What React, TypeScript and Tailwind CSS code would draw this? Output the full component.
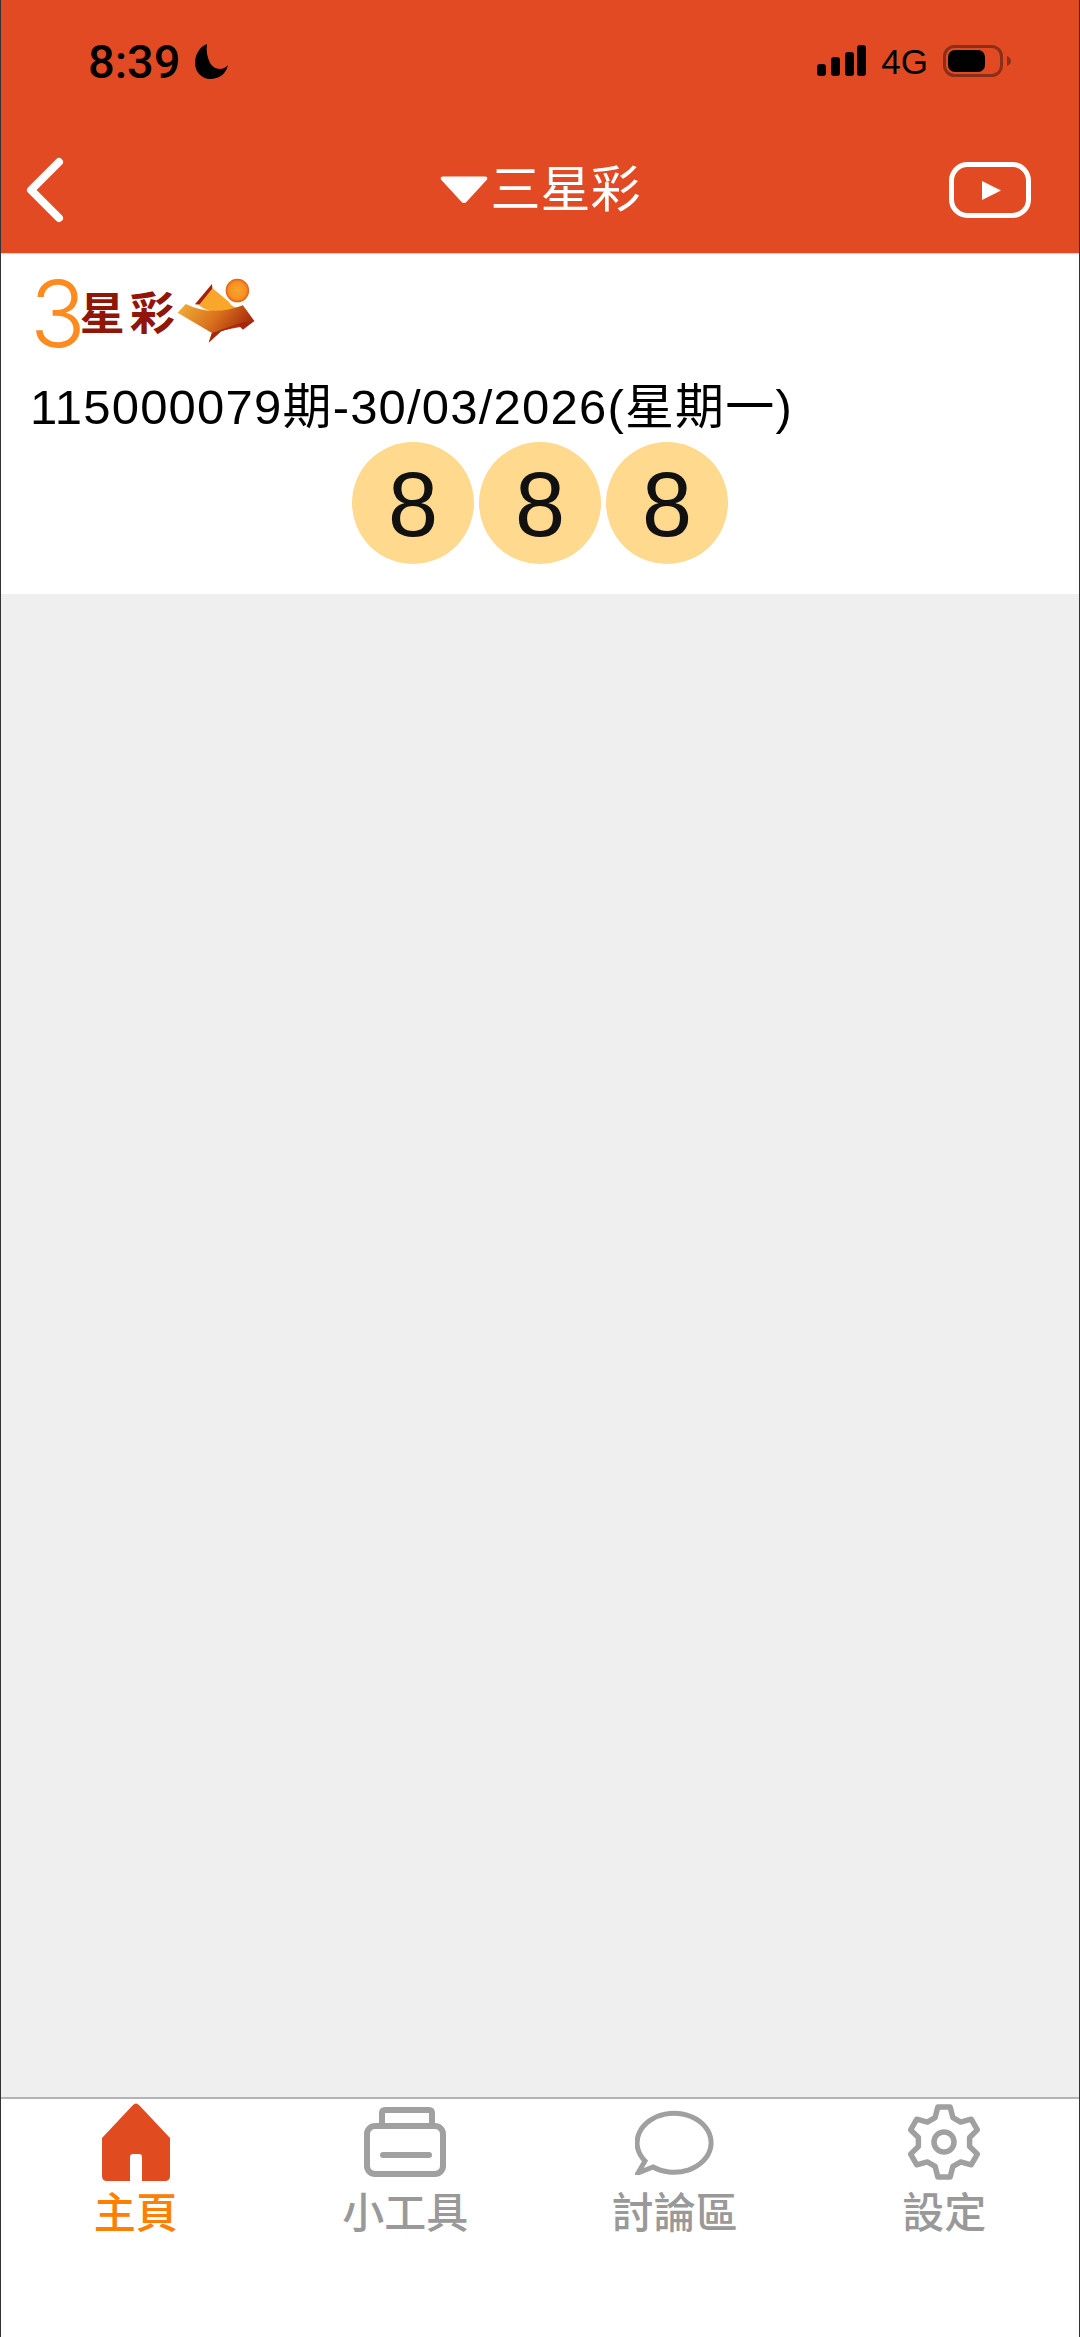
const latin = "font-['Liberation_Sans','Noto_Sans_CJK_TC',sans-serif]";

// six-tooth outline for the settings tab
const gearPoints = Array.from({ length: 6 }, (_, i) => {
  const mid = -90 + i * 60;
  return [
    [mid - 20, 26],
    [mid - 10, 35.5],
    [mid + 10, 35.5],
    [mid + 20, 26],
  ].map(([deg, r]) => {
    const a = (deg * Math.PI) / 180;
    return `${(38 + r * Math.cos(a)).toFixed(2)},${(38 + r * Math.sin(a)).toFixed(2)}`;
  }).join(" ");
}).join(" ");

function HomeIcon() {
  return (
    <svg width="68" height="78" viewBox="0 0 68 78">
      <path
        d="M31 2 Q34 -1 37 2 L68 35 V73 Q68 78 63 78 H40 V54 Q40 51 37 51 H31 Q28 51 28 54 V78 H5 Q0 78 0 73 V35 Z"
        fill="#E04B20"
      />
    </svg>
  );
}

function ToolsIcon() {
  return (
    <svg width="82" height="70" viewBox="0 0 82 70" fill="none" stroke="#A0A0A0" strokeWidth="6">
      <rect x="3" y="19" width="76" height="48" rx="8" />
      <path d="M18 18 V6 Q18 3 21 3 H65 Q68 3 68 6 V18" />
      <path d="M19 48 H65" strokeLinecap="round" />
    </svg>
  );
}

function ChatIcon() {
  return (
    <svg width="79" height="66" viewBox="0 0 79 66" fill="none" stroke="#A0A0A0" strokeWidth="5">
      <path d="M18 58 L3 64 L10 52 A37 29.5 0 1 1 18 58 Z" />
    </svg>
  );
}

function GearIcon() {
  return (
    <svg width="76" height="76" viewBox="0 0 76 76" fill="none" stroke="#A0A0A0" strokeWidth="5.5" strokeLinejoin="round">
      <polygon points={gearPoints} />
      <circle cx="38" cy="38" r="10" />
    </svg>
  );
}

function LogoMark() {
  return (
    <svg className="ml-[-4px] mt-[-6px]" width="80" height="68" viewBox="530 75 245 205">
      <defs>
        <linearGradient id="band" x1="0" y1="0" x2="1" y2="0.4">
          <stop offset="0" stopColor="#F2B23A" />
          <stop offset="0.55" stopColor="#D9701C" />
          <stop offset="1" stopColor="#A5280C" />
        </linearGradient>
        <radialGradient id="sun">
          <stop offset="0" stopColor="#F9A62C" />
          <stop offset="0.75" stopColor="#F59020" />
          <stop offset="1" stopColor="#E2591A" />
        </radialGradient>
      </defs>
      <path d="M588 157 L640 95 L642 112 L606 158 Z" fill="#A3210E" />
      <path d="M600 160 L642 108 L690 148 A36 36 0 0 0 735 165 L740 175 Q640 195 600 160 Z" fill="#F9A72B" />
      <path d="M535 183 L560 156 Q640 196 735 160 L770 208 L735 225 L655 240 L630 275 L640 245 Z" fill="url(#band)" />
      <path d="M630 275 L640 245 L735 212 L770 208 L735 235 L722 222 L668 240 Z" fill="#A5280C" />
      <circle cx="718" cy="115" r="36" fill="url(#sun)" />
    </svg>
  );
}

const tabs = [
  { label: "主頁", icon: <HomeIcon />, active: true },
  { label: "小工具", icon: <ToolsIcon />, active: false },
  { label: "討論區", icon: <ChatIcon />, active: false },
  { label: "設定", icon: <GearIcon />, active: false },
];

export default function App() {
  return (
    <div className={`${latin} flex min-h-[2337px] flex-col border-x border-[#333] bg-white text-black`}>
      <header className="h-[254px] border-b border-[#d8d8d8] bg-[#E24A24]">
        <div className="flex h-[122px] items-center justify-between pl-[87px] pr-[68px]">
          <div className="flex items-center gap-[14px]">
            <span className="font-['Roboto'] text-[47px] leading-none font-medium">8:39</span>
            <svg width="34" height="35" viewBox="0 0 34 35">
              <path d="M12 0 C4 3 0 11 0 19 C0 29 8 35 15 35 C24 35 31 30 33 21 C28 27 19 26 15 19 C12 13 11 6 12 0 Z" fill="black" />
            </svg>
          </div>
          <div className="flex items-center gap-[15px]">
            <svg width="49" height="32" viewBox="0 0 49 32">
              <rect x="0" y="19" width="9" height="12" rx="3" />
              <rect x="14" y="12" width="9" height="19" rx="3" />
              <rect x="28" y="7" width="9" height="24" rx="3" />
              <rect x="40" y="0" width="9" height="31" rx="3" />
            </svg>
            <span className="text-[35px] leading-none">4G</span>
            <svg width="68" height="32" viewBox="0 0 68 32">
              <rect x="1.5" y="1.5" width="57" height="29" rx="10" fill="none" stroke="#8B2F18" strokeWidth="3" />
              <rect x="5" y="5" width="37" height="22" rx="7" />
              <path d="M64 11 Q68 13 68 16 Q68 19 64 21 Z" fill="#8B2F18" />
            </svg>
          </div>
        </div>
        <nav className="flex h-[131px] items-center px-[24px] pt-[5px]">
          <div className="flex-1">
            <svg width="42" height="66" viewBox="0 0 42 66" fill="none" stroke="white" strokeWidth="8" strokeLinecap="round" strokeLinejoin="round">
              <path d="M34 5 L6 33 L34 61" />
            </svg>
          </div>
          <div className="flex items-center text-white">
            <svg width="48" height="28" viewBox="0 0 50 28">
              <path d="M3 0 H47 Q50 0 49 3 L27 27 Q25 28 23 27 L1 3 Q0 0 3 0 Z" fill="white" />
            </svg>
            <span className="ml-[3px] text-[50px] leading-none">三星彩</span>
          </div>
          <div className="flex flex-1 justify-end">
            <svg className="mr-[24px]" width="82" height="56" viewBox="0 0 82 56" fill="none">
              <rect x="2.5" y="2.5" width="77" height="51" rx="16" stroke="white" strokeWidth="5" />
              <path d="M33 19 L52 28.5 L33 38 Z" fill="white" />
            </svg>
          </div>
        </nav>
      </header>

      <section className="h-[340px] pl-[29px] pt-[22px]">
        <div className="flex h-[76px] items-center">
          <span className="font-['Inter'] text-[92px] leading-none font-[350] text-[#FF8A1E]">3</span>
          <span className="ml-[-6px] text-[45px] leading-none font-bold tracking-[5px] text-[#8F1608]">星彩</span>
          <LogoMark />
        </div>
        <div className="mt-[27px] text-[49px] leading-[56px] tracking-[1.2px] whitespace-nowrap">115000079期-30/03/2026(星期一)</div>
        <div className="mt-[7px] flex justify-center gap-[5px] pr-[29px]">
          {[8, 8, 8].map((n, i) => (
            <div key={i} className="flex h-[122px] w-[122px] items-center justify-center rounded-full bg-[#FFD98E] pt-[3px] text-[90px] leading-none text-[#111]">
              {n}
            </div>
          ))}
        </div>
      </section>

      <main className="flex-1 bg-[#EFEFEF]" />

      <footer className="grid h-[240px] grid-cols-4 border-t-2 border-[#B4B4B4] pt-[3px]">
        {tabs.map((t) => (
          <div key={t.label} className="flex flex-col items-center">
            <div className="flex h-[80px] items-center justify-center">{t.icon}</div>
            <span className={`mt-[6px] text-[42px] leading-[52px] font-medium ${t.active ? "text-[#FF8000]" : "text-[#999]"}`}>
              {t.label}
            </span>
          </div>
        ))}
      </footer>
    </div>
  );
}
